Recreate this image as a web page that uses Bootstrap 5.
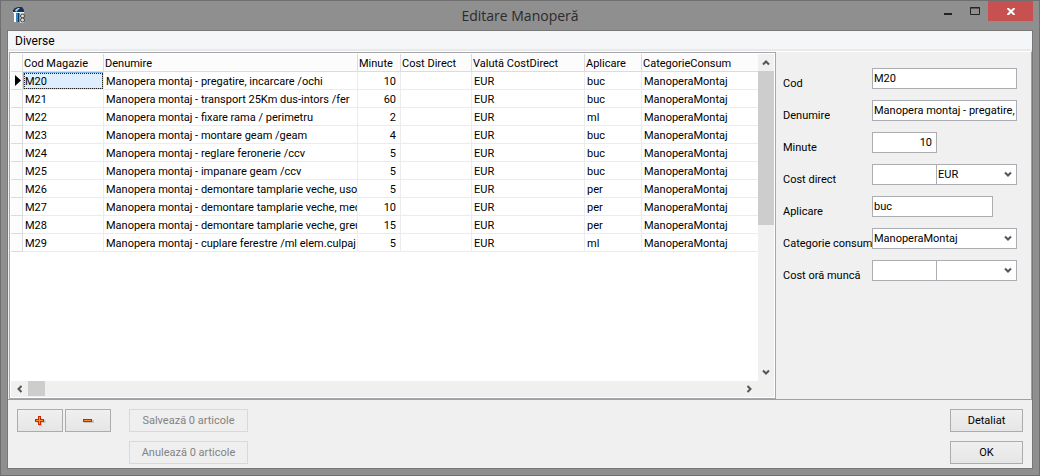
<!DOCTYPE html>
<html lang="ro">
<head>
<meta charset="utf-8">
<meta name="viewport" content="width=device-width, initial-scale=1">
<title>Editare Manoperă</title>
<link href="https://cdn.jsdelivr.net/npm/bootstrap@5.3.0/dist/css/bootstrap.min.css" rel="stylesheet">
<style>
  body { font: 11px/14px Roboto, sans-serif; color: #000; background: #8f8f8f; }
  .app-window { border: 1px solid #6f6f6f; padding: 0 6px; }
  .title-bar { height: 29px; color: #2b2b2b; display: grid; grid-template-columns: 1fr auto 1fr; }
  .title-text { font: 14px/20px "Open Sans", sans-serif; padding-top: 5px; }
  .app-icon { margin-left: 5px; }
  .win-controls button { border: 0; padding: 0; background: none; height: 20px; display: grid; place-items: center; }
  .win-controls .win-min, .win-controls .win-max { width: 27px; }
  .win-controls .win-close { width: 45px; background: #c75050; }
  .client { border: 1px solid #777; background: #f0f0f0; margin-bottom: 6px; }
  .menu-strip { height: 20px; background: #f5f6f7; border-bottom: 2px solid #e9e9e9; padding: 1px 7px 0; }
  .menu-strip a { color: #000; text-decoration: none; font-size: 12px; line-height: 18px; }
  .work-area { border-top: 1px solid #fff; border-bottom: 1px solid #a0a0a0; border-right: 1px solid #a0a0a0; }
  .grid-pane { flex: 0 0 767px; margin-left: 1px; border: 1px solid #a5a7ad; background: #fff; padding: 1px; display: grid; grid-template-columns: minmax(0, 1fr) 16px; grid-template-rows: minmax(0, 1fr) 16px; }
  .data-grid { table-layout: fixed; width: 100%; border-collapse: separate; border-spacing: 0; }
  .data-grid th, .data-grid td { height: 18px; padding: 2px 2px 0; border: solid #ececec; border-width: 0 1px 1px 0; line-height: 15px; font-weight: normal; white-space: nowrap; overflow: hidden; }
  .data-grid th { background: #fcfcfc; border-color: #dcdcdc; padding: 2px 1px 0; }
  .data-grid th:last-child, .data-grid td:last-child { border-right: 0; }
  .data-grid td:first-child { background: #fcfcfc; border-color: #dcdcdc; padding: 0; }
  .data-grid .num-cell { text-align: right; padding-right: 4px; }
  .data-grid .picked { background: #deeeff; box-shadow: inset 0 0 0 1px #7fb4ea; outline: 1px dotted #222; outline-offset: -2px; }
  .v-bar, .h-bar { background: #f0f0f0; }
  .h-bar { grid-column: 1 / 3; padding-right: 16px; }
  .v-thumb { background: #cdcdcd; height: 154px; }
  .h-thumb { background: #cdcdcd; width: 17px; height: 15px; }
  .bar-btn { border: 0; padding: 0; background: none; width: 16px; height: 17px; display: grid; place-items: center; }
  .h-bar .bar-btn { height: 15px; width: 17px; }
  .detail-form { padding: 16px 14px 0 7px; gap: 11px; }
  .form-line { display: flex; height: 21px; }
  .form-line label { width: 89px; white-space: nowrap; padding-top: 9px; flex: none; }
  .field-area { display: flex; width: 145px; height: 21px; }
  .box { height: 21px; border: 1px solid #abadb3; border-radius: 0; background-color: #fff; color: #000; padding: 0 1px 1px; min-width: 0; font: inherit; line-height: 17px; }
  .box-short { width: 65px; padding-right: 4px; }
  .box-unit { width: 121px; }
  select.box { appearance: none; background: #fff url("data:image/svg+xml,%3Csvg xmlns='http://www.w3.org/2000/svg' viewBox='0 0 8 7'%3E%3Cpath d='M1 1.5l3 3 3-3' fill='none' stroke='%23555' stroke-width='2'/%3E%3C/svg%3E") no-repeat right 4px center / 8px 7px; }
  .box-joined { margin-left: -1px; }
  .action-bar { padding: 9px 9px 4px; }
  .push { height: 23px; border: 1px solid #acacac; border-radius: 0; background: linear-gradient(#f0f0f0, #e5e5e5); color: #000; padding: 1px 0 0; font: inherit; display: grid; place-items: center; }
  .push:disabled { border-color: #d9d9d9; background: #efefef; color: #838383; }
  .push-tool { width: 46px; }
  .push-wide { width: 119px; }
  .push-main { width: 73px; }
  .push-stack { display: grid; gap: 9px; }
  .tool-pair { display: flex; gap: 2px; margin-right: 18px; }
</style>
</head>
<body>
<div class="app-window min-vh-100 d-flex flex-column">
  <header class="title-bar">
    <svg class="app-icon" width="16" height="26" viewBox="0 0 16 26" aria-hidden="true">
      <path d="M1 11V9l2-2 3-1h4l2 3v2H6v1z" fill="#163250"/>
      <path d="M3 9l3-2h2L4 11z" fill="#9fd4f2"/>
      <path d="M1 11h11v1H1z" fill="#e8f4fa"/>
      <path d="M2 12h2v9H2z" fill="#fff"/><path d="M4 12h2v9H4z" fill="#2a8ac8"/><path d="M6 12h1v9H6z" fill="#10385c"/>
      <path d="M8 12h4v10H8z" fill="#d8d8d8"/>
      <circle cx="10.500" cy="15" r="2" fill="#ddd" stroke="#444"/><circle cx="10.500" cy="19" r="2" fill="#ddd" stroke="#444"/>
    </svg>
    <h1 class="title-text m-0">Editare Manoperă</h1>
    <div class="win-controls d-flex justify-content-end">
      <button class="win-min" aria-label="Minimizare"><svg width="8" height="8"><path d="M0 7h8" stroke="#222" stroke-width="2"/></svg></button>
      <button class="win-max" aria-label="Maximizare"><svg width="10" height="8"><path d="M.5 .5h9v7h-9z M0 1h10" fill="none" stroke="#222"/></svg></button>
      <button class="win-close" aria-label="Închidere"><svg width="8" height="7"><path d="M.5 0l7 7M7.500 0l-7 7" stroke="#fff" stroke-width="2"/></svg></button>
    </div>
  </header>
  <div class="client flex-fill d-flex flex-column">
    <nav class="menu-strip"><a href="#">Diverse</a></nav>
    <main class="work-area d-flex flex-fill">
      <section class="grid-pane">
        <div class="overflow-hidden">
        <table class="data-grid">
          <colgroup><col style="width:12px"><col style="width:81px"><col style="width:254px"><col style="width:43px"><col style="width:71px"><col style="width:113px"><col style="width:57px"><col></colgroup>
          <thead><tr><th></th><th>Cod Magazie</th><th>Denumire</th><th>Minute</th><th>Cost Direct</th><th>Valută CostDirect</th><th>Aplicare</th><th>CategorieConsum</th></tr></thead>
          <tbody>
            <tr><td><svg class="d-block ms-1" width="6" height="11"><path d="M0 0l6 5.500-6 5.500z"/></svg></td><td class="picked">M20</td><td>Manopera montaj - pregatire, incarcare /ochi</td><td class="num-cell">10</td><td></td><td>EUR</td><td>buc</td><td>ManoperaMontaj</td></tr>
            <tr><td></td><td>M21</td><td>Manopera montaj - transport 25Km dus-intors /fer</td><td class="num-cell">60</td><td></td><td>EUR</td><td>buc</td><td>ManoperaMontaj</td></tr>
            <tr><td></td><td>M22</td><td>Manopera montaj - fixare rama / perimetru</td><td class="num-cell">2</td><td></td><td>EUR</td><td>ml</td><td>ManoperaMontaj</td></tr>
            <tr><td></td><td>M23</td><td>Manopera montaj - montare geam /geam</td><td class="num-cell">4</td><td></td><td>EUR</td><td>buc</td><td>ManoperaMontaj</td></tr>
            <tr><td></td><td>M24</td><td>Manopera montaj - reglare feronerie /ccv</td><td class="num-cell">5</td><td></td><td>EUR</td><td>buc</td><td>ManoperaMontaj</td></tr>
            <tr><td></td><td>M25</td><td>Manopera montaj - impanare geam /ccv</td><td class="num-cell">5</td><td></td><td>EUR</td><td>buc</td><td>ManoperaMontaj</td></tr>
            <tr><td></td><td>M26</td><td>Manopera montaj - demontare tamplarie veche, usor</td><td class="num-cell">5</td><td></td><td>EUR</td><td>per</td><td>ManoperaMontaj</td></tr>
            <tr><td></td><td>M27</td><td>Manopera montaj - demontare tamplarie veche, med</td><td class="num-cell">10</td><td></td><td>EUR</td><td>per</td><td>ManoperaMontaj</td></tr>
            <tr><td></td><td>M28</td><td>Manopera montaj - demontare tamplarie veche, greu</td><td class="num-cell">15</td><td></td><td>EUR</td><td>per</td><td>ManoperaMontaj</td></tr>
            <tr><td></td><td>M29</td><td>Manopera montaj - cuplare ferestre /ml elem.culpaj</td><td class="num-cell">5</td><td></td><td>EUR</td><td>ml</td><td>ManoperaMontaj</td></tr>
          </tbody>
        </table>
        </div>
        <div class="v-bar d-flex flex-column">
          <button class="bar-btn" aria-label="Sus"><svg width="8" height="7"><path d="M1 5.500l3-3 3 3" fill="none" stroke="#555" stroke-width="2"/></svg></button>
          <div class="v-thumb"></div>
          <button class="bar-btn mt-auto" aria-label="Jos"><svg width="8" height="7"><path d="M1 1.500l3 3 3-3" fill="none" stroke="#555" stroke-width="2"/></svg></button>
        </div>
        <div class="h-bar d-flex">
          <button class="bar-btn" aria-label="Stânga"><svg width="7" height="8"><path d="M5.500 1l-3 3 3 3" fill="none" stroke="#555" stroke-width="2"/></svg></button>
          <div class="h-thumb"></div>
          <button class="bar-btn ms-auto" aria-label="Dreapta"><svg width="7" height="8"><path d="M1.500 1l3 3-3 3" fill="none" stroke="#555" stroke-width="2"/></svg></button>
        </div>
      </section>
      <form class="detail-form d-flex flex-column">
        <div class="form-line"><label for="cod">Cod</label><div class="field-area"><input id="cod" class="box w-100" value="M20"></div></div>
        <div class="form-line"><label for="den">Denumire</label><div class="field-area"><input id="den" class="box w-100" value="Manopera montaj - pregatire, incarcare /ochi"></div></div>
        <div class="form-line"><label for="min">Minute</label><div class="field-area"><input id="min" class="box box-short text-end" value="10"></div></div>
        <div class="form-line"><label for="cost">Cost direct</label><div class="field-area"><input id="cost" class="box box-short"><select class="box box-joined flex-fill" aria-label="Valută"><option>EUR</option></select></div></div>
        <div class="form-line"><label for="apl">Aplicare</label><div class="field-area"><input id="apl" class="box box-unit" value="buc"></div></div>
        <div class="form-line"><label for="cat">Categorie consum</label><div class="field-area"><select id="cat" class="box w-100"><option>ManoperaMontaj</option></select></div></div>
        <div class="form-line"><label for="ora">Cost oră muncă</label><div class="field-area"><input id="ora" class="box box-short"><select class="box box-joined flex-fill" aria-label="Valută oră"><option></option></select></div></div>
      </form>
    </main>
    <footer class="action-bar d-flex align-items-start">
      <div class="tool-pair">
        <button class="push push-tool" aria-label="Adaugă"><svg width="11" height="11"><path d="M2 5.500h8.500M5.500 2v8.500" stroke="#c4c4c4" stroke-width="3"/><path d="M0 4.500h9M4.500 0v9" stroke="#c42a00" stroke-width="3"/><path d="M1 4.500h7M4.500 1v7" stroke="#ff8a2a"/></svg></button>
        <button class="push push-tool" aria-label="Șterge"><svg width="11" height="11"><path d="M1 5.500h10" stroke="#c4c4c4" stroke-width="3"/><path d="M0 4.500h9" stroke="#c42a00" stroke-width="3"/><path d="M1 4.500h7" stroke="#ff8a2a"/></svg></button>
      </div>
      <div class="push-stack">
        <button class="push push-wide" disabled>Salvează 0 articole</button>
        <button class="push push-wide" disabled>Anulează 0 articole</button>
      </div>
      <div class="push-stack ms-auto">
        <button class="push push-main">Detaliat</button>
        <button class="push push-main">OK</button>
      </div>
    </footer>
  </div>
</div>
<script src="https://cdn.jsdelivr.net/npm/bootstrap@5.3.0/dist/js/bootstrap.bundle.min.js"></script>
</body>
</html>
